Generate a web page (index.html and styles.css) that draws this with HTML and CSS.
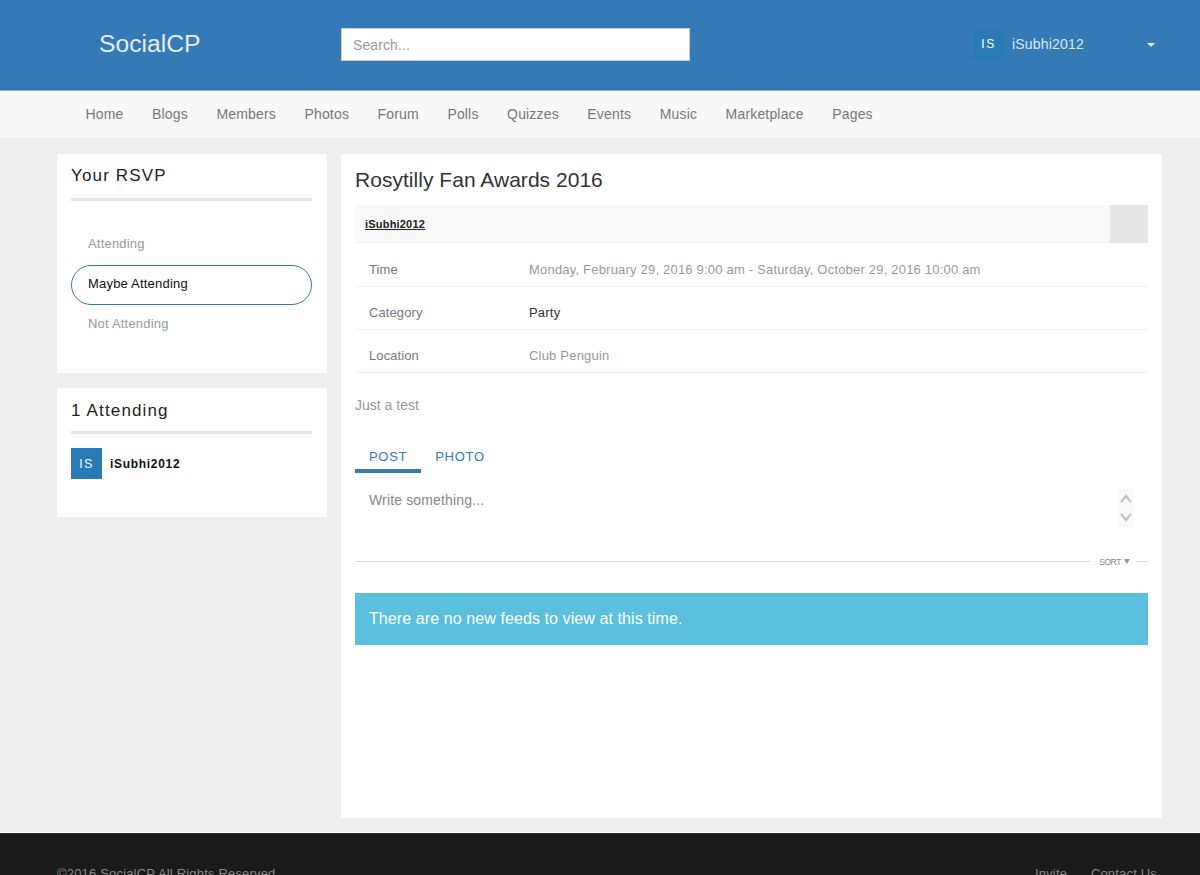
FILE: index.html
```html
<!DOCTYPE html>
<html lang="en">
<head>
    <meta charset="UTF-8">
    <meta name="viewport" content="width=device-width, initial-scale=1.0">
    <title>Rosytilly Fan Awards 2016 - SocialCP</title>
    <link rel="stylesheet" href="styles.css">
</head>
<body>
    <!-- TOP HEADER -->
    <header class="topbar">
        <a class="brand" href="#">SocialCP</a>
        <input class="search" type="text" placeholder="Search...">
        <div class="account">
            <span class="avatar avatar-top">IS</span>
            <span class="account-name">iSubhi2012</span>
            <span class="caret"></span>
        </div>
    </header>

    <!-- MAIN NAV -->
    <nav class="mainnav">
        <a href="#">Home</a>
        <a href="#">Blogs</a>
        <a href="#">Members</a>
        <a href="#">Photos</a>
        <a href="#">Forum</a>
        <a href="#">Polls</a>
        <a href="#">Quizzes</a>
        <a href="#">Events</a>
        <a href="#">Music</a>
        <a href="#">Marketplace</a>
        <a href="#">Pages</a>
    </nav>

    <div class="page">
        <!-- SIDEBAR -->
        <aside class="sidebar">
            <section class="card rsvp-card">
                <h3 class="card-title">Your RSVP</h3>
                <ul class="rsvp-list">
                    <li>Attending</li>
                    <li class="active">Maybe Attending</li>
                    <li>Not Attending</li>
                </ul>
            </section>
            <section class="card guests-card">
                <h3 class="card-title">1 Attending</h3>
                <div class="guest">
                    <span class="avatar">IS</span>
                    <span class="guest-name">iSubhi2012</span>
                </div>
            </section>
        </aside>

        <!-- EVENT -->
        <main class="event">
            <h1 class="event-title">Rosytilly Fan Awards 2016</h1>
            <div class="owner-bar">
                <a href="#">iSubhi2012</a>
                <span class="owner-box"></span>
            </div>
            <div class="info-row">
                <span class="info-label">Time</span>
                <span class="info-value">Monday, February 29, 2016 9:00 am - Saturday, October 29, 2016 10:00 am</span>
            </div>
            <div class="info-row">
                <span class="info-label">Category</span>
                <span class="info-value dark">Party</span>
            </div>
            <div class="info-row">
                <span class="info-label">Location</span>
                <span class="info-value">Club Penguin</span>
            </div>
            <p class="event-desc">Just a test</p>

            <div class="tabs">
                <a class="tab active" href="#">POST</a>
                <a class="tab" href="#">PHOTO</a>
            </div>
            <div class="composer">
                <span class="composer-text">Write something...</span>
                <div class="spinner">
                    <svg width="12" height="9" viewBox="0 0 12 9"><path d="M1 8l5-6 5 6" fill="none" stroke="#c4c4c4" stroke-width="2.2"/></svg>
                    <svg width="12" height="9" viewBox="0 0 12 9"><path d="M1 1l5 6 5-6" fill="none" stroke="#c4c4c4" stroke-width="2.2"/></svg>
                </div>
            </div>
            <div class="sort-line">
                <span class="rule"></span>
                <span class="sort">SORT<i class="sort-caret"></i></span>
                <span class="rule short"></span>
            </div>
            <div class="alert">There are no new feeds to view at this time.</div>
        </main>
    </div>

    <!-- FOOTER -->
    <footer class="footer">
        <span>©2016 SocialCP All Rights Reserved.</span>
        <span class="footer-links"><a href="#">Invite</a><b>.</b><a href="#">Contact Us</a></span>
    </footer>
</body>
</html>
```

FILE: styles.css
```css
/* General Styles */
html, body {
    height: 875px;
    overflow: hidden;
}

body {
    margin: 0;
    background: #eeeeee;
    font-family: "Liberation Sans", Arial, sans-serif;
    font-size: 14px;
    color: #333333;
}

a {
    text-decoration: none;
}

/* Top Header */
.topbar {
    display: flex;
    align-items: center;
    height: 89px;
    padding: 0 0 1px 99px;
    background: #337ab7;
    border-bottom: 1px solid #8fb5d8;
    box-shadow: inset 0 -1px 0 #2e6da4;
}

.brand {
    width: 242px;
    margin-top: -2px;
    color: #e6edf4;
    font-size: 24.7px;
}

.search {
    box-sizing: border-box;
    width: 349px;
    height: 33px;
    padding: 0 11px;
    border: 1px solid #cccccc;
    background: #ffffff;
    font-family: inherit;
    font-size: 14px;
    letter-spacing: 0.1px;
    outline: none;
}

.search::placeholder {
    color: #999999;
}

.account {
    display: flex;
    align-items: center;
    margin-left: 283px;
    margin-top: -1px;
    color: #dfe8f1;
}

.account-name {
    width: 135px;
    margin-left: 8px;
    font-size: 14px;
    letter-spacing: 0.2px;
}

.caret {
    width: 0;
    height: 0;
    margin-top: 2px;
    border-left: 4px solid transparent;
    border-right: 4px solid transparent;
    border-top: 4px solid #e6edf4;
}

/* Avatars */
.avatar {
    display: flex;
    align-items: center;
    justify-content: center;
    flex-shrink: 0;
    width: 31px;
    height: 31px;
    background: #287bb5;
    color: #ffffff;
    font-size: 12px;
    letter-spacing: 1.5px;
}

/* Main Nav */
.mainnav {
    display: flex;
    align-items: center;
    gap: 28.5px;
    height: 45px;
    padding: 0 0 2px 85.5px;
    background: #f8f8f8;
}

.mainnav a {
    color: #777777;
    font-size: 14px;
    letter-spacing: 0.17px;
}

/* Page Columns */
.page {
    display: grid;
    grid-template-columns: 270px 821px;
    column-gap: 14px;
    align-items: start;
    height: 664px;
    padding: 16px 0 15px 57px;
}

.sidebar {
    display: flex;
    flex-direction: column;
    gap: 15px;
}

.card {
    box-sizing: border-box;
    padding: 0 15px 0 14px;
    background: #ffffff;
}

.rsvp-card {
    height: 219px;
}

.guests-card {
    height: 129px;
}

.card-title {
    margin: 0;
    padding: 11px 0;
    border-bottom: 3px solid #e5e5e5;
    color: #222222;
    font-size: 17px;
    font-weight: normal;
    line-height: 22px;
    letter-spacing: 1.15px;
}

.guests-card .card-title {
    padding: 12px 0 9px;
}

/* RSVP List */
.rsvp-list {
    margin: 24px 0 0;
    padding: 0;
    list-style: none;
}

.rsvp-list li {
    box-sizing: border-box;
    height: 40px;
    padding-left: 16px;
    border: 1px solid transparent;
    border-radius: 20px;
    color: #999999;
    font-size: 13px;
    letter-spacing: 0.2px;
    line-height: 36px;
}

.rsvp-list li.active {
    border-color: #337ab7;
    color: #111111;
}

/* Guests */
.guest {
    display: flex;
    align-items: center;
    margin-top: 14px;
}

.guest-name {
    margin-left: 8px;
    color: #111111;
    font-size: 12px;
    font-weight: bold;
    letter-spacing: 0.7px;
}

/* Event */
.event {
    box-sizing: border-box;
    height: 664px;
    padding: 0 14px;
    background: #ffffff;
}

.event-title {
    box-sizing: border-box;
    height: 51px;
    margin: 0;
    padding-top: 13px;
    color: #333333;
    font-size: 21px;
    font-weight: normal;
    line-height: 26px;
    letter-spacing: 0.03px;
}

.owner-bar {
    box-sizing: border-box;
    display: flex;
    align-items: center;
    justify-content: space-between;
    height: 38px;
    padding-left: 10px;
    background: #f9f9f9;
    border-bottom: 1px solid #f1f1f1;
}

.owner-bar a {
    color: #222222;
    font-size: 11px;
    font-weight: bold;
    letter-spacing: 0.2px;
    text-decoration: underline;
}

.owner-box {
    width: 38px;
    height: 38px;
    background: #e5e5e5;
}

.info-row {
    box-sizing: border-box;
    display: flex;
    align-items: center;
    height: 43px;
    padding: 9px 0 0 14px;
    border-bottom: 1px solid #f1f1f1;
    font-size: 13px;
    letter-spacing: 0.1px;
}

.owner-bar + .info-row {
    height: 44px;
}

.info-label {
    width: 160px;
    color: #777777;
}

.info-value {
    color: #999999;
    letter-spacing: 0.2px;
}

.info-value.dark {
    color: #333333;
}

.event-desc {
    margin: 24px 0 0;
    color: #999999;
    font-size: 14px;
    line-height: 16px;
}

/* Tabs */
.tabs {
    display: flex;
    margin-top: 28px;
}

.tab {
    box-sizing: border-box;
    height: 32px;
    padding: 3px 14px 0;
    color: #337ab7;
    font-size: 13px;
    letter-spacing: 0.7px;
    line-height: 25px;
}

.tab.active {
    border-bottom: 4px solid #337ab7;
}

/* Composer */
.composer {
    box-sizing: border-box;
    display: flex;
    justify-content: space-between;
    align-items: flex-start;
    height: 88px;
    padding: 16px 14px 0;
}

.composer-text {
    padding-top: 3px;
    color: #888888;
    font-size: 14px;
    letter-spacing: 0.15px;
}

.spinner {
    display: flex;
    flex-direction: column;
    align-items: center;
    justify-content: center;
    gap: 10px;
    width: 16px;
    height: 38px;
    background: #f9f9f9;
}

/* Sort Line */
.sort-line {
    display: flex;
    align-items: center;
    height: 1px;
}

.rule {
    flex: 1;
    height: 1px;
    background: #dddddd;
}

.rule.short {
    flex: 0 0 12px;
}

.sort {
    display: flex;
    align-items: center;
    padding: 0 6px 0 9px;
    color: #888888;
    font-size: 8.5px;
    letter-spacing: -0.4px;
}

.sort-caret {
    width: 0;
    height: 0;
    margin-left: 3px;
    border-left: 3.5px solid transparent;
    border-right: 3.5px solid transparent;
    border-top: 5px solid #999999;
}

/* Alert */
.alert {
    box-sizing: border-box;
    height: 52px;
    margin-top: 31px;
    padding: 0 14px;
    background: #5bc0de;
    color: #ffffff;
    font-size: 16px;
    letter-spacing: 0.09px;
    line-height: 52px;
}

/* Footer */
.footer {
    display: flex;
    justify-content: space-between;
    height: 60px;
    padding: 32px 43px 0 57px;
    background: #1a1a1a;
    border-top: 1px solid #333333;
    box-shadow: 0 -1px 0 #ffffff;
    color: #888888;
    font-size: 13px;
    letter-spacing: 0.18px;
}

.footer-links a {
    color: #888888;
}

.footer-links b {
    margin: 0 10px;
    font-weight: normal;
}
```
